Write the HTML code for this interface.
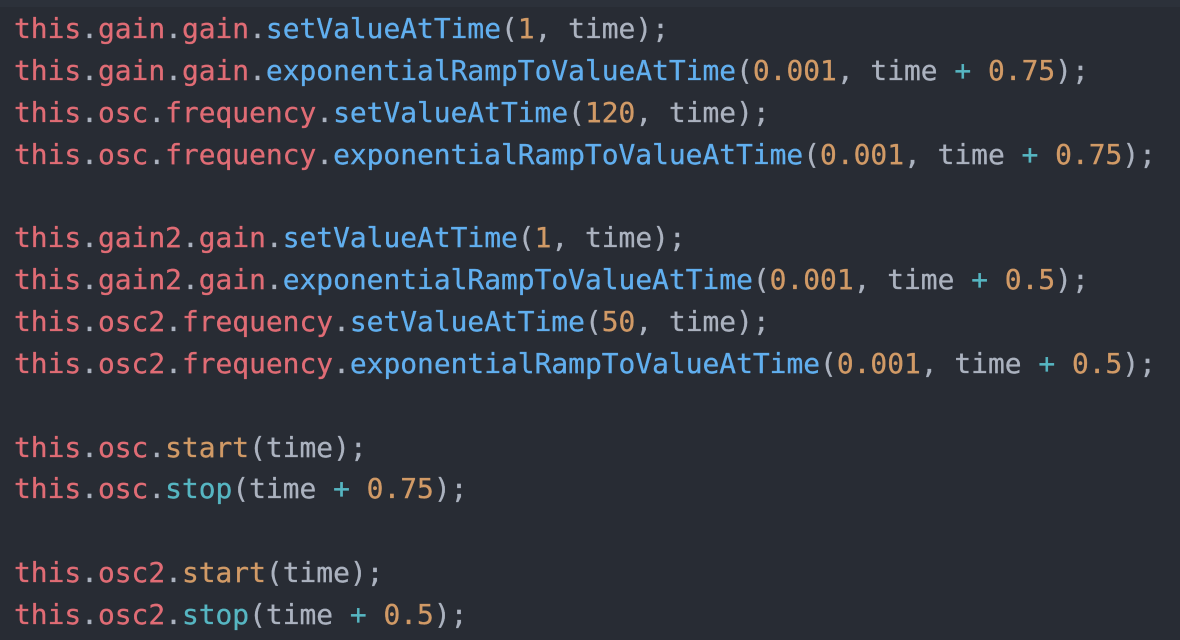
<!DOCTYPE html>
<html><head><meta charset="utf-8"><style>
html,body{margin:0;padding:0;width:1180px;height:640px;overflow:hidden;background:#282c34;}
.top{position:absolute;left:0;top:0;width:1180px;height:7px;background:#2c313a;}
pre{position:absolute;left:14px;top:8px;margin:0;font-family:"DejaVu Sans Mono","Liberation Mono",monospace;font-size:27.9px;line-height:41.86px;color:#abb2bf;-webkit-text-stroke:0.3px currentColor;}
.r{color:#e06c75}.b{color:#61afef}.o{color:#d19a66}.c{color:#56b6c2}
</style></head><body><div class="top"></div>
<pre><span class="r">this</span>.<span class="r">gain</span>.<span class="r">gain</span>.<span class="b">setValueAtTime</span>(<span class="o">1</span>, time);
<span class="r">this</span>.<span class="r">gain</span>.<span class="r">gain</span>.<span class="b">exponentialRampToValueAtTime</span>(<span class="o">0.001</span>, time <span class="c">+</span> <span class="o">0.75</span>);
<span class="r">this</span>.<span class="r">osc</span>.<span class="r">frequency</span>.<span class="b">setValueAtTime</span>(<span class="o">120</span>, time);
<span class="r">this</span>.<span class="r">osc</span>.<span class="r">frequency</span>.<span class="b">exponentialRampToValueAtTime</span>(<span class="o">0.001</span>, time <span class="c">+</span> <span class="o">0.75</span>);

<span class="r">this</span>.<span class="r">gain2</span>.<span class="r">gain</span>.<span class="b">setValueAtTime</span>(<span class="o">1</span>, time);
<span class="r">this</span>.<span class="r">gain2</span>.<span class="r">gain</span>.<span class="b">exponentialRampToValueAtTime</span>(<span class="o">0.001</span>, time <span class="c">+</span> <span class="o">0.5</span>);
<span class="r">this</span>.<span class="r">osc2</span>.<span class="r">frequency</span>.<span class="b">setValueAtTime</span>(<span class="o">50</span>, time);
<span class="r">this</span>.<span class="r">osc2</span>.<span class="r">frequency</span>.<span class="b">exponentialRampToValueAtTime</span>(<span class="o">0.001</span>, time <span class="c">+</span> <span class="o">0.5</span>);

<span class="r">this</span>.<span class="r">osc</span>.<span class="o">start</span>(time);
<span class="r">this</span>.<span class="r">osc</span>.<span class="c">stop</span>(time <span class="c">+</span> <span class="o">0.75</span>);

<span class="r">this</span>.<span class="r">osc2</span>.<span class="o">start</span>(time);
<span class="r">this</span>.<span class="r">osc2</span>.<span class="c">stop</span>(time <span class="c">+</span> <span class="o">0.5</span>);</pre>
</body></html>
